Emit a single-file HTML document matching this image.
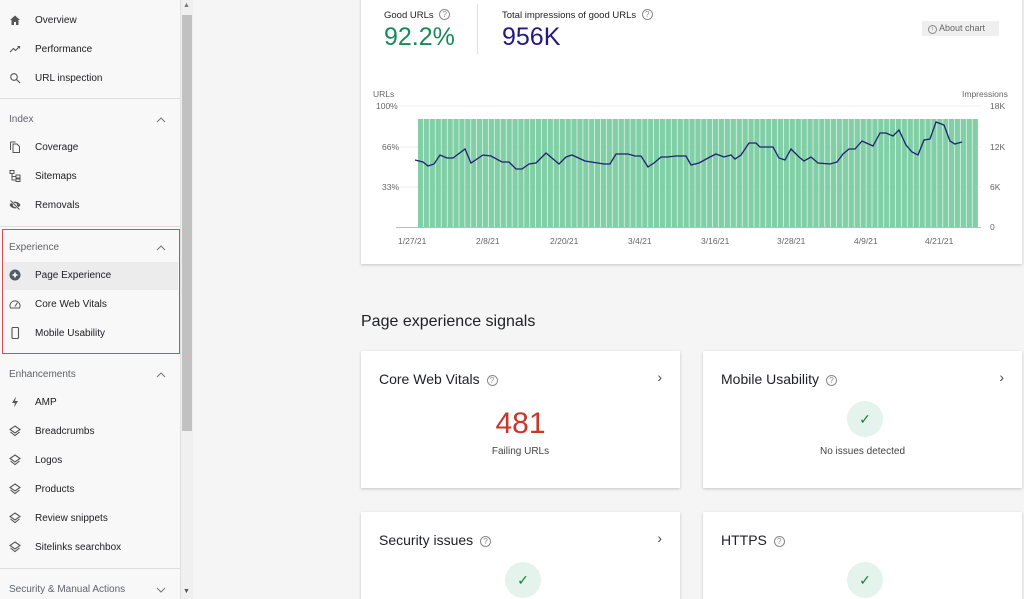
<!DOCTYPE html>
<html><head><meta charset="utf-8"><style>
*{box-sizing:border-box;margin:0;padding:0}
html,body{width:1024px;height:599px;overflow:hidden}
body{background:#f5f5f5;font-family:"Liberation Sans",sans-serif;position:relative;color:#202124}
.side{position:absolute;left:0;top:0;width:181px;height:599px;background:#f8f8f8;border-right:1px solid #e0e0e0}
.sb{position:absolute;left:181px;top:0;width:12px;height:599px;background:#f0f0f0}
.thumb{position:absolute;left:182px;top:15px;width:10px;height:416px;background:#c1c1c1}
.it{position:absolute;left:0;width:180px;height:29px;font-size:10px;color:#202124;line-height:29px;padding-left:35px}
.it svg{position:absolute;left:9px;top:8px}
.hd{position:absolute;left:9px;font-size:10px;color:#5f6368}
.car{position:absolute;left:156px}
.hr{position:absolute;left:0;width:180px;height:1px;background:#dedede}
.card{position:absolute;background:#fff;box-shadow:0 1px 3px rgba(0,0,0,.2)}
.q{display:inline-block;width:11px;height:11px;border:1px solid #888;border-radius:50%;font-size:8px;line-height:9px;text-align:center;color:#888;vertical-align:1px;margin-left:3px}
.ct{position:absolute;left:18px;top:20px;font-size:14px}
.chev{position:absolute;right:18px;top:18px;font-size:14px;color:#444}
.ok{position:absolute;width:36px;height:36px;border-radius:50%;background:#e4f3ec;color:#188038;font-size:14px;text-align:center;line-height:36px}
.ax{position:absolute;font-size:8.5px;color:#666}
</style></head><body>
<div class="side">
<div class="it" style="top:6px"><svg width="12" height="12" viewBox="0 0 12 12"><path d="M1 6L6 1.5 11 6H9.5V11H7V8H5V11H2.5V6Z" fill="#555"/></svg>Overview</div>
<div class="it" style="top:35px"><svg width="12" height="12" viewBox="0 0 12 12"><path d="M1 9L4.5 5.5 6.5 7.5 10.5 3.5M8.5 3.5H10.5V5.5" stroke="#555" fill="none" stroke-width="1.1"/></svg>Performance</div>
<div class="it" style="top:64px"><svg width="12" height="12" viewBox="0 0 12 12"><circle cx="5" cy="5" r="3.3" stroke="#555" fill="none" stroke-width="1.1"/><path d="M7.5 7.5L11 11" stroke="#555" stroke-width="1.2"/></svg>URL inspection</div>
<div class="hr" style="top:98px"></div>
<div class="hd" style="top:114px">Index</div><svg class="car" style="top:116px" width="10" height="8"><path d="M1 6L5 2 9 6" stroke="#777" fill="none"/></svg>
<div class="it" style="top:133px"><svg width="12" height="12" viewBox="0 0 12 12"><path d="M1.5 1H6.5M1.5 1V9M4 3H8L10.5 5.5V11.5H4Z" stroke="#555" fill="none" stroke-width="1"/></svg>Coverage</div>
<div class="it" style="top:162px"><svg width="12" height="12" viewBox="0 0 12 12"><rect x="1" y="0.5" width="4" height="3" stroke="#555" fill="none"/><rect x="7" y="5" width="4" height="3" stroke="#555" fill="none"/><rect x="7" y="9" width="4" height="2.5" stroke="#555" fill="none"/><path d="M3 3.5V10H7M3 6.5H7" stroke="#555" fill="none"/></svg>Sitemaps</div>
<div class="it" style="top:191px"><svg width="12" height="12" viewBox="0 0 12 12"><path d="M0.5 6C3 1.5 9 1.5 11.5 6 9 10.5 3 10.5 0.5 6Z" fill="#555"/><circle cx="6" cy="6" r="2" fill="#f8f8f8"/><path d="M1.5 1.5L10.5 10.5" stroke="#f8f8f8" stroke-width="2"/><path d="M1.5 1.5L10.5 10.5" stroke="#555" stroke-width="1.1"/></svg>Removals</div>
<div class="hr" style="top:226px"></div>
<div style="position:absolute;left:2px;top:229px;width:178px;height:125px;border:1.5px solid #d05050"></div>
<div class="hd" style="top:242px">Experience</div><svg class="car" style="top:244px" width="10" height="8"><path d="M1 6L5 2 9 6" stroke="#777" fill="none"/></svg>
<div style="position:absolute;left:4px;top:262px;width:174px;height:28px;background:#ececec"></div>
<div class="it" style="top:261px"><svg width="12" height="12" viewBox="0 0 12 12"><circle cx="6" cy="6" r="5.5" fill="#4f5b66"/><path d="M6 2.5L7 5 9.5 6 7 7 6 9.5 5 7 2.5 6 5 5Z" fill="#fff"/></svg>Page Experience</div>
<div class="it" style="top:290px"><svg width="12" height="12" viewBox="0 0 12 12"><path d="M1.5 10A5 5 0 1 1 10.5 10Z" stroke="#555" fill="none"/><path d="M6 8.5L8.5 4.5" stroke="#555"/></svg>Core Web Vitals</div>
<div class="it" style="top:319px"><svg width="12" height="12" viewBox="0 0 12 12"><rect x="3" y="0.5" width="6.5" height="11" rx="1" stroke="#555" fill="none" stroke-width="1.1"/></svg>Mobile Usability</div>
<div class="hd" style="top:369px">Enhancements</div><svg class="car" style="top:371px" width="10" height="8"><path d="M1 6L5 2 9 6" stroke="#777" fill="none"/></svg>
<div class="it" style="top:388px"><svg width="12" height="12" viewBox="0 0 12 12"><path d="M7 0.5L3 7H6L5 11.5 9 5H6Z" fill="#555"/></svg>AMP</div>
<div class="it" style="top:417px"><svg width="12" height="12" viewBox="0 0 12 12"><path d="M6 1L11 4.5 6 8 1 4.5Z M1.5 7L6 10.5 10.5 7" stroke="#555" fill="none" stroke-width="1.1"/></svg>Breadcrumbs</div>
<div class="it" style="top:446px"><svg width="12" height="12" viewBox="0 0 12 12"><path d="M6 1L11 4.5 6 8 1 4.5Z M1.5 7L6 10.5 10.5 7" stroke="#555" fill="none" stroke-width="1.1"/></svg>Logos</div>
<div class="it" style="top:475px"><svg width="12" height="12" viewBox="0 0 12 12"><path d="M6 1L11 4.5 6 8 1 4.5Z M1.5 7L6 10.5 10.5 7" stroke="#555" fill="none" stroke-width="1.1"/></svg>Products</div>
<div class="it" style="top:504px"><svg width="12" height="12" viewBox="0 0 12 12"><path d="M6 1L11 4.5 6 8 1 4.5Z M1.5 7L6 10.5 10.5 7" stroke="#555" fill="none" stroke-width="1.1"/></svg>Review snippets</div>
<div class="it" style="top:533px"><svg width="12" height="12" viewBox="0 0 12 12"><path d="M6 1L11 4.5 6 8 1 4.5Z M1.5 7L6 10.5 10.5 7" stroke="#555" fill="none" stroke-width="1.1"/></svg>Sitelinks searchbox</div>
<div class="hr" style="top:568px"></div>
<div class="hd" style="top:584px">Security &amp; Manual Actions</div><svg class="car" style="top:586px" width="10" height="8"><path d="M1 2L5 6 9 2" stroke="#777" fill="none"/></svg>
</div>
<div class="sb"></div><div class="thumb"></div>
<div style="position:absolute;left:183px;top:2px;font-size:7px;color:#777">▲</div>
<div style="position:absolute;left:183px;top:588px;font-size:7px;color:#555">▼</div>

<div class="card" style="left:361px;top:-4px;width:661px;height:268px">
<div style="position:absolute;left:23px;top:13px;font-size:9.5px">Good URLs <span class="q">?</span></div>
<div style="position:absolute;left:23px;top:27px;font-size:25px;color:#188a5a">92.2%</div>
<div style="position:absolute;left:116px;top:8px;width:1px;height:50px;background:#e0e0e0"></div>
<div style="position:absolute;left:141px;top:13px;font-size:9.5px">Total impressions of good URLs <span class="q">?</span></div>
<div style="position:absolute;left:141px;top:27px;font-size:25px;color:#221a80">956K</div>
<div style="position:absolute;left:561px;top:25px;width:77px;height:15px;background:#efefef;font-size:9px;color:#666;line-height:15px;padding-left:6px"><span class="q" style="width:9px;height:9px;font-size:6px;line-height:7px;margin:0">i</span> About chart</div>
</div>
<svg style="position:absolute;left:361px;top:0" width="661" height="260">
<defs><pattern id="b" x="57" y="0" width="5.9" height="260" patternUnits="userSpaceOnUse"><rect x="0" y="0" width="5.3" height="260" fill="#81cfa6"/></pattern></defs>
<line x1="35" y1="106" x2="620" y2="106" stroke="#eee"/><line x1="35" y1="147" x2="620" y2="147" stroke="#eee"/><line x1="35" y1="187" x2="620" y2="187" stroke="#eee"/>
<rect x="57" y="119" width="560" height="108" fill="url(#b)"/>
<line x1="35" y1="227.5" x2="620" y2="227.5" stroke="#bbb"/>
<polyline transform="translate(-361,0)" fill="none" stroke="#1e2370" stroke-width="1.3" points="415,160 423,162 428,166 434,164 440,155 447,158 453,158 465,149 471,163 483,155 491,156 502,162 509,162 516,169 522,169 529,164 536,163 546,153 559,164 566,157 572,155 585,161 604,164 610,164 616,154 628,154 635,156 641,156 648,167 654,163 661,157 667,157 676,156 686,156 691,165 699,163 710,157 716,154 724,157 731,155 735,159 741,155 749,143 756,143 760,147 770,147 773,147 779,158 785,160 791,149 799,157 804,161 811,157 818,163 830,164 837,162 843,154 849,149 855,149 862,141 873,146 880,133 886,133 893,136 899,130 906,145 912,152 918,155 924,140 930,139 936,122 944,125 950,141 955,144 962,142"/>
</svg>
<div class="ax" style="left:373px;top:89px">URLs</div><div class="ax" style="left:962px;top:89px">Impressions</div>
<div class="ax" style="left:376px;top:101px">100%</div><div class="ax" style="left:382px;top:142px">66%</div><div class="ax" style="left:382px;top:182px">33%</div>
<div class="ax" style="left:990px;top:101px">18K</div><div class="ax" style="left:990px;top:142px">12K</div><div class="ax" style="left:990px;top:182px">6K</div><div class="ax" style="left:990px;top:222px">0</div>
<div class="ax" style="left:398px;top:236px">1/27/21</div><div class="ax" style="left:476px;top:236px">2/8/21</div><div class="ax" style="left:550px;top:236px">2/20/21</div><div class="ax" style="left:628px;top:236px">3/4/21</div><div class="ax" style="left:701px;top:236px">3/16/21</div><div class="ax" style="left:777px;top:236px">3/28/21</div><div class="ax" style="left:854px;top:236px">4/9/21</div><div class="ax" style="left:925px;top:236px">4/21/21</div>

<div style="position:absolute;left:361px;top:313px;font-size:16px">Page experience signals</div>
<div class="card" style="left:361px;top:351px;width:319px;height:137px">
<div class="ct">Core Web Vitals <span class="q">?</span></div><div class="chev">›</div>
<div style="position:absolute;left:0;width:319px;text-align:center;top:56px;font-size:30px;color:#c5382c">481</div>
<div style="position:absolute;left:0;width:319px;text-align:center;top:95px;font-size:10px;color:#444">Failing URLs</div>
</div>
<div class="card" style="left:703px;top:351px;width:319px;height:137px">
<div class="ct">Mobile Usability <span class="q">?</span></div><div class="chev">›</div>
<div class="ok" style="left:144px;top:50px">✓</div>
<div style="position:absolute;left:0;width:319px;text-align:center;top:95px;font-size:10px;color:#444">No issues detected</div>
</div>
<div class="card" style="left:361px;top:512px;width:319px;height:100px">
<div class="ct">Security issues <span class="q">?</span></div><div class="chev">›</div>
<div class="ok" style="left:144px;top:50px">✓</div>
</div>
<div class="card" style="left:703px;top:512px;width:319px;height:100px">
<div class="ct">HTTPS <span class="q">?</span></div>
<div class="ok" style="left:144px;top:50px">✓</div>
</div>
</body></html>
